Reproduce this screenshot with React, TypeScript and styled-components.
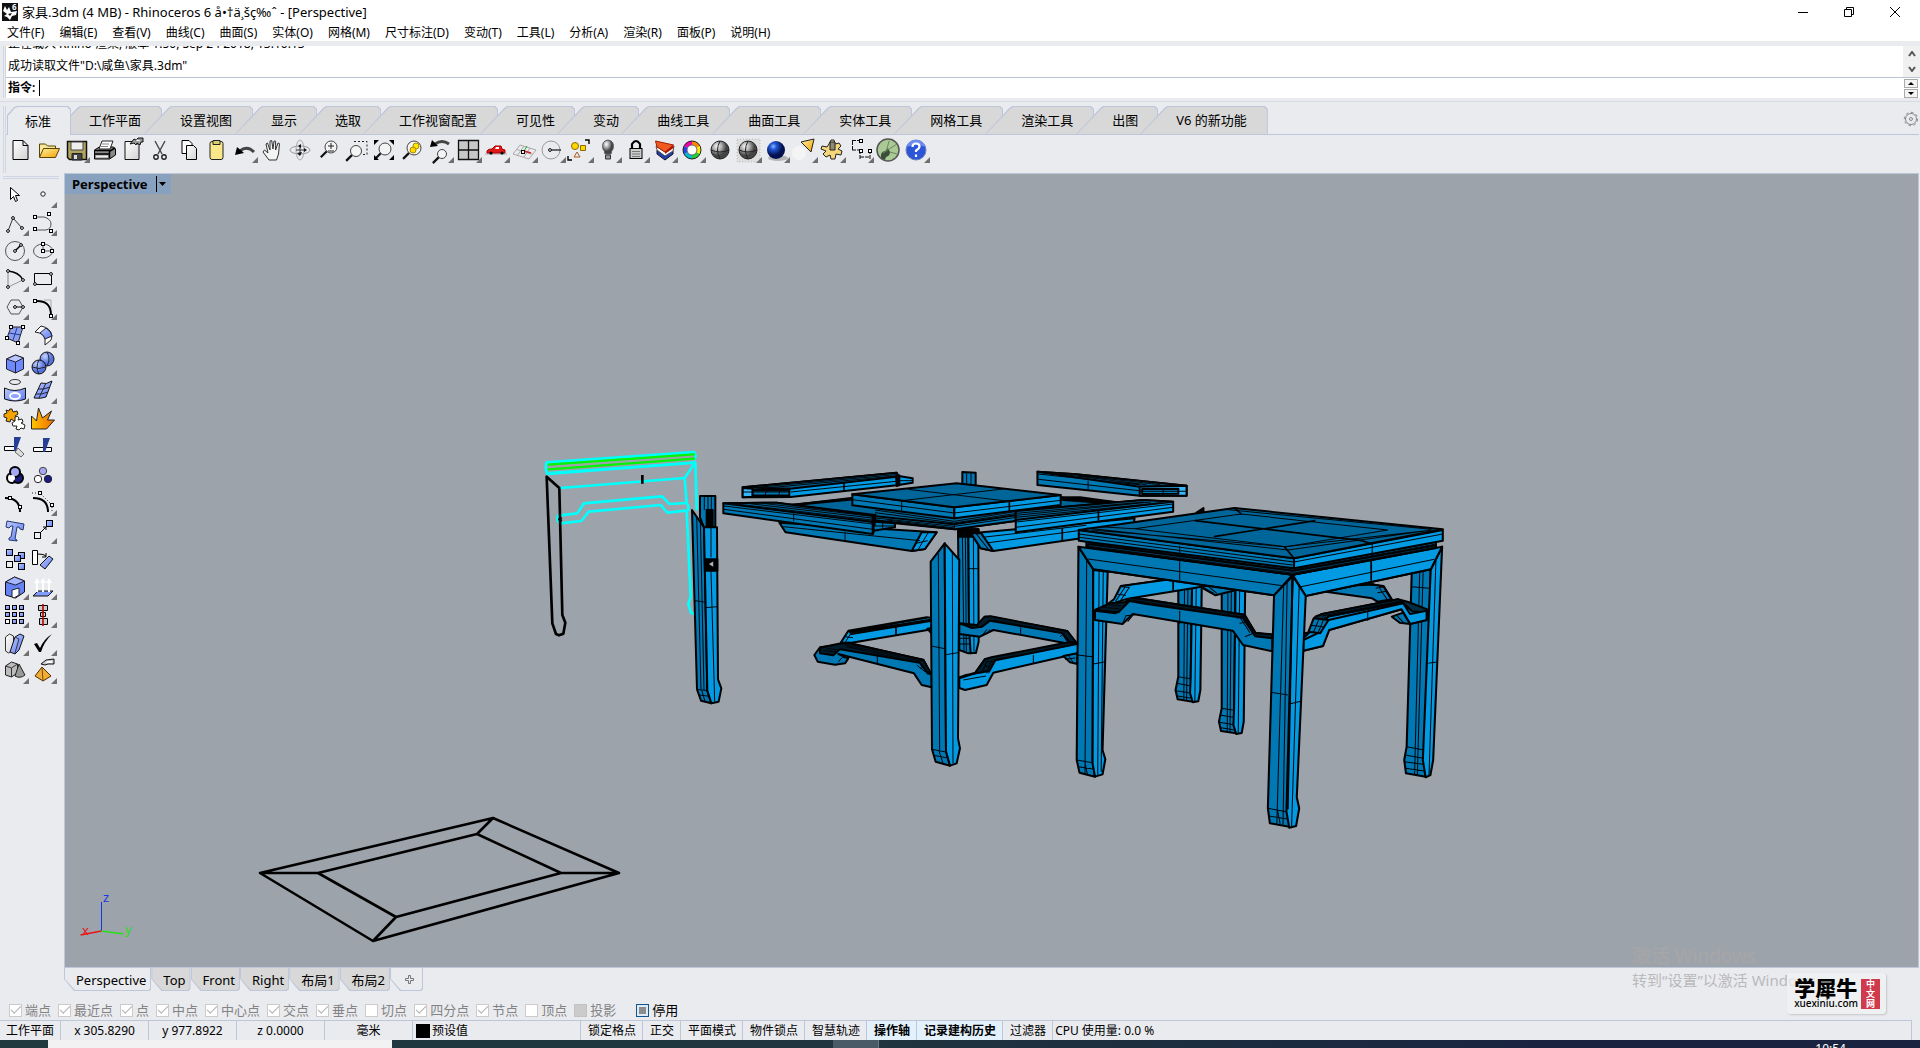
import React from "react";
import styled, { createGlobalStyle, css } from "styled-components";

const EDGE = "#bec6da";
const FACE = "#eaebef";

const GlobalStyle = createGlobalStyle`
  * { box-sizing: border-box; }
  html, body { margin: 0; height: 100%; overflow: hidden; }
  body {
    font-family: "Noto Sans", "Noto Sans CJK SC", sans-serif;
    font-size: 12px;
    line-height: 16px;
    color: #000;
    background: ${FACE};
  }
  button, input { font: inherit; color: inherit; margin: 0; padding: 0; border: 0; background: none; outline: none; }
`;

const Window = styled.div`
  display: flex;
  flex-direction: column;
  height: 100vh;
  position: relative;
  background: ${FACE};
  white-space: nowrap;
`;

/* ---------- title and menu ---------- */
const TitleBar = styled.header`
  display: flex;
  align-items: center;
  height: 24px;
  padding: 0 2px 0 1px;
  background: #fff;
  & > svg { flex: none; }
`;
const Title = styled.h1`
  margin: 0 0 0 3px;
  flex: 1;
  font-size: 13px;
  font-weight: 400;
`;
const WindowButton = styled.button`
  width: 46px;
  height: 20px;
  display: grid;
  place-items: center;
`;
const MenuBar = styled.nav`
  display: flex;
  gap: 15px;
  height: 17px;
  padding-left: 7px;
  background: #fff;
`;
const MenuItem = styled.button`
  line-height: 17px;
`;

/* ---------- command area ---------- */
const CommandArea = styled.section`
  display: flex;
  margin-top: 5px;
  height: 52px;
  padding-left: 3px;
`;
const SideGrip = styled.span`
  width: 3px;
  border: solid #d0d6e2;
  border-width: 0 1px;
  flex: none;
`;
const CommandBody = styled.div`
  flex: 1;
  background: #fff;
`;
const History = styled.div`
  display: flex;
  height: 32px;
  border-bottom: 1px solid #b9c3d2;
`;
const HistoryText = styled.div`
  flex: 1;
  display: flex;
  flex-direction: column;
  justify-content: flex-end;
  overflow: hidden;
  padding-left: 2px;
  line-height: 22px;
`;
const ScrollColumn = styled.div`
  width: 17px;
  display: flex;
  flex-direction: column;
  justify-content: space-around;
  align-items: center;
  background: #f0f0f0;
`;
const Prompt = styled.div`
  display: flex;
  align-items: center;
  height: 20px;
  padding-left: 2px;
  gap: 4px;
`;
const PromptLabel = styled.label`
  font-weight: 600;
`;
const PromptInput = styled.input`
  flex: 1;
  height: 16px;
  border-left: 1px solid #000;
`;
const Spinner = styled.div`
  width: 14px;
  margin-right: 2px;
  display: grid;
  gap: 1px;
`;
const SpinButton = styled.button`
  height: 9px;
  border: 1px solid #aaa;
  background: #f4f4f4;
  display: grid;
  place-items: center;
`;

/* ---------- toolbar ---------- */
const Ribbon = styled.section`
  display: flex;
  margin-top: 3px;
  height: 72px;
  padding: 4px 1px 0 3px;
  border-top: 1px solid #d6dae5;
`;
const RibbonBody = styled.div`
  flex: 1;
  min-width: 0;
`;
const TabRow = styled.div`
  display: flex;
  height: 29px;
  border-bottom: 1px solid ${EDGE};
`;
const SlantTab = styled.button<{ $on?: boolean; $long?: boolean }>`
  position: relative;
  z-index: 0;
  height: 28px;
  flex: none;
  font-size: 13px;
  line-height: 24px;
  padding: 0 ${(p) => (p.$long ? 21 : 20)}px 0 36px;
  margin-left: -18px;
  &::before, &::after {
    content: "";
    position: absolute;
    z-index: -1;
    inset: 0;
    background: ${EDGE};
    clip-path: polygon(0 100%, 24px 2px, 27px 0, calc(100% - 3px) 0, 100% 3px, 100% 100%);
  }
  &::after {
    inset: 1px 1px 0 1px;
    background: #d8d8d8;
  }
  ${(p) => p.$on && css`
    z-index: 2;
    height: 29px;
    padding: 0 20px 0 18px;
    margin-left: 1px;
    &::before, &::after {
      clip-path: polygon(0 100%, 0 9px, 7px 1px, 10px 0, calc(100% - 3px) 0, 100% 3px, 100% 100%);
    }
    &::before { bottom: 1px; background: ${EDGE}; }
    &::after { background: ${FACE}; }
  `}
`;
const GearButton = styled.button`
  margin-left: auto;
  width: 16px;
  height: 26px;
  display: grid;
  place-items: center;
`;
const IconRow = styled.div`
  display: flex;
  padding-top: 1px;
`;
const Tool = styled.button`
  width: 28px;
  height: 28px;
  flex: none;
  & > svg { display: block; overflow: visible; }
`;

/* ---------- workspace ---------- */
const Workspace = styled.div`
  flex: 1;
  min-height: 0;
  display: flex;
`;
const Palette = styled.aside`
  width: 64px;
  flex: none;
  padding: 3px 0 0 1px;
`;
const TopGrip = styled.span`
  display: block;
  width: 56px;
  height: 3px;
  margin: 0 0 2px 2px;
  border: solid #cdd5e4;
  border-width: 1px 0;
`;
const PaletteGrid = styled.div`
  display: grid;
  grid-template-columns: 28px 28px;
`;
const Stage = styled.main`
  flex: 1;
  min-width: 0;
  display: flex;
  flex-direction: column;
`;
const Viewport = styled.section`
  flex: 1;
  min-height: 0;
  position: relative;
  margin-right: 1px;
  border: 1px solid ${EDGE};
  background: #9da3ab;
  overflow: hidden;
`;
const Scene = styled.svg`
  position: absolute;
  inset: 0;
  width: 100%;
  height: 100%;
`;
const ViewLabel = styled.div`
  position: relative;
  display: inline-flex;
  align-items: center;
  gap: 8px;
  height: 20px;
  padding: 0 5px 0 7px;
  background: #88a1be;
  font-size: 13px;
  font-weight: 700;
`;
const ViewMenu = styled.button`
  height: 16px;
  padding-left: 2px;
  border-left: 1px solid #000;
  display: grid;
  place-items: center;
`;
const ViewTabs = styled.div`
  display: flex;
  height: 32px;
`;
const ViewTab = styled.button<{ $on?: boolean }>`
  position: relative;
  z-index: ${(p) => (p.$on ? 1 : 0)};
  height: 23px;
  font-size: 13px;
  line-height: 22px;
  padding: 1px 5px 0 12px;
  &::before, &::after {
    content: "";
    position: absolute;
    z-index: -1;
    inset: 0;
    background: ${EDGE};
    clip-path: polygon(0 0, 100% 0, 100% calc(100% - 2px), calc(100% - 2px) 100%, 10px 100%, 0 11px);
  }
  &::after {
    inset: 0 1px 1px 1px;
    background: ${(p) => (p.$on ? FACE : "#d8d8d8")};
  }
`;

/* ---------- snap row and status ---------- */
const SnapRow = styled.div`
  display: flex;
  align-items: center;
  height: 20px;
  padding-left: 4px;
  font-size: 13px;
`;
const SnapList = styled.div`
  display: flex;
  gap: 7px;
  padding-left: 2px;
`;
const SnapLabel = styled.label<{ $live?: boolean }>`
  display: flex;
  align-items: center;
  gap: 3px;
  color: ${(p) => (p.$live ? "#000" : "#838383")};
  margin-left: ${(p) => (p.$live ? "13px" : "0")};
`;
const Box = styled.input<{ $kind?: "mixed" | "live" }>`
  appearance: none;
  width: 13px;
  height: 13px;
  display: grid;
  place-items: center;
  border: 1px solid #cbcbcb;
  background: #fff;
  &:checked::before {
    content: "";
    width: 9px;
    height: 4px;
    margin-bottom: 3px;
    border: solid #b2b2b2;
    border-width: 0 0 1px 1px;
    transform: rotate(-45deg);
  }
  ${(p) => p.$kind === "mixed" && css`background: #cbcbcb; border-color: #c2c2c2;`}
  ${(p) => p.$kind === "live" && css`
    border-color: #10558f;
    background: #8c8c8c;
    box-shadow: inset 0 0 0 2px #dfeaf4;
  `}
`;
const StatusBar = styled.footer`
  display: flex;
  height: 20px;
  margin-right: 8px;
  border-top: 1px solid ${EDGE};
  border-right: 1px solid ${EDGE};
`;
const Cell = styled.div<{ $w?: number; $grow?: boolean }>`
  display: flex;
  align-items: center;
  justify-content: ${(p) => (p.$grow ? "flex-start" : "center")};
  gap: 2px;
  flex: none;
  ${(p) => p.$w && css`width: ${p.$w}px;`}
  padding: ${(p) => (p.$grow ? "0 3px" : "0 5px")};
  border-right: 1px solid ${EDGE};
`;
const Swatch = styled.span`
  width: 14px;
  height: 14px;
  background: #000;
`;
const ToggleCell = styled.button<{ $on?: boolean }>`
  flex: none;
  padding: 0 6px 0 7px;
  border-right: 1px solid ${EDGE};
  ${(p) => p.$on && css`font-weight: 700; background: #e3f1fc;`}
`;
const Cpu = styled.output`
  padding-left: 2px;
  line-height: 19px;
`;
const Taskbar = styled.div`
  display: flex;
  height: 8px;
  padding-left: 48px;
  background: linear-gradient(90deg, #213a40, #20353f 45%, #1a2440 80%);
  overflow: hidden;
`;
const TaskSearch = styled.div`
  width: 344px;
  background: #f2f2f2;
`;
const TaskActive = styled.div`
  width: 46px;
  margin-left: 441px;
  background: #495b66;
  border-right: 1px solid #6d7d86;
`;
const Clock = styled.time`
  margin-left: auto;
  margin-right: 74px;
  padding-top: 1px;
  line-height: 16px;
  color: #fff;
`;

/* ---------- overlays ---------- */
const Activation = styled.div`
  position: absolute;
  right: 94px;
  bottom: 57px;
  width: 194px;
  font-size: 15px;
  line-height: 22px;
  color: #b9b9bb;
`;
const ActivationTitle = styled.div`
  font-size: 19px;
  line-height: 26px;
  color: #a8a6a6;
`;
const Brand = styled.div`
  position: absolute;
  right: 34px;
  bottom: 34px;
  display: flex;
  align-items: center;
  gap: 3px;
  height: 41px;
  padding: 0 6px 0 7px;
  border-radius: 4px;
  background: rgba(241, 242, 244, 0.7);
  box-shadow: 1px 1px 2px #c4c5c9;
`;
const BrandName = styled.div`
  font-size: 21px;
  line-height: 20px;
  font-weight: 900;
`;
const BrandUrl = styled.div`
  font-size: 10px;
  line-height: 11px;
  font-weight: 500;
`;
const BrandSeal = styled.div`
  width: 19px;
  height: 30px;
  background: #cf3b4d;
  color: #fff;
  font-size: 9px;
  line-height: 10px;
  font-weight: 700;
  text-align: center;
  white-space: normal;
  padding: 0 5px;
`;

/* ---------- icon pieces ---------- */
const Corner = () => <path d="M28 21v6h-6z" fill="#707070" />;
const Node = ({ x, y, s = 3 }: { x: number; y: number; s?: number }) => (
  <rect x={x - s / 2} y={y - s / 2} width={s} height={s} fill="#fff" stroke="#000" />
);
const Dot = ({ x, y }: { x: number; y: number }) => (
  <circle cx={x} cy={y} r="1.4" fill="#fff" stroke="#000" />
);
const Lens = ({ x = 17, y = 12, r = 6 }: { x?: number; y?: number; r?: number }) => (
  <>
    <path d={`M${x - r * 0.7} ${y + r * 0.7}L${x - r * 0.7 - 6} ${y + r * 0.7 + 6}`} stroke="#111" strokeWidth="2.2" />
    <circle cx={x} cy={y} r={r} fill="#f4f4f4" stroke="#444" />
  </>
);
const Ball = () => (
  <>
    <circle cx="14" cy="14" r="9" fill="url(#grayBall)" stroke="#222" />
    <path d="M14 5q-5 9 0 18M5 14q9 4 18 0" fill="none" stroke="#222" />
  </>
);
const Blue = ({ x, y, s = 6 }: { x: number; y: number; s?: number }) => (
  <rect x={x} y={y} width={s} height={s} fill="url(#blueFill)" stroke="#000" />
);

const Defs = () => (
  <svg width="0" height="0" style={{ position: "absolute" }} aria-hidden="true">
    <defs>
      <radialGradient id="grayBall" cx=".35" cy=".3"><stop offset="0" stopColor="#fff" /><stop offset=".5" stopColor="#aaa" /><stop offset="1" stopColor="#444" /></radialGradient>
      <radialGradient id="blueBall" cx=".35" cy=".3"><stop offset="0" stopColor="#8fb8ff" /><stop offset=".35" stopColor="#2258d8" /><stop offset="1" stopColor="#03124f" /></radialGradient>
      <radialGradient id="softBall" cx=".35" cy=".3"><stop offset="0" stopColor="#c6d3ff" /><stop offset="1" stopColor="#5572d8" /></radialGradient>
      <linearGradient id="blueFill" x2="1" y2="1"><stop offset="0" stopColor="#bccaff" /><stop offset="1" stopColor="#5d7bf0" /></linearGradient>
      <linearGradient id="paper" x2="1" y2="1"><stop offset="0" stopColor="#fff" /><stop offset="1" stopColor="#d2d2d2" /></linearGradient>
      <linearGradient id="gold" x2="1" y2="1"><stop offset="0" stopColor="#fff0a0" /><stop offset="1" stopColor="#f2a300" /></linearGradient>
      <linearGradient id="flame" x2="1" y2="0"><stop offset="0" stopColor="#ffc400" /><stop offset="1" stopColor="#ee6a00" /></linearGradient>
    </defs>
  </svg>
);

type IconDef = [string, React.ReactNode, boolean];

const toolbarIcons: IconDef[] = [
  ["新建", <path d="M7 4.500h10l5 5v14H7zM17 4.500v5h5" fill="url(#paper)" stroke="#000" />, false],
  ["打开", <><path d="M5.500 21V8h6l2 2h8v3" fill="#f8e89a" stroke="#5a4300" /><path d="M5.500 21.500l4-9h16l-4 9z" fill="url(#gold)" stroke="#5a4300" /></>, false],
  ["保存", <><path d="M5.500 5.500h19v18h-17l-2-2z" fill="#b0a460" stroke="#111" strokeWidth="1.500" /><path d="M9 6h12v8H9z" fill="#eee" stroke="#444" /><path d="M10 17.500h10V24H10z" fill="#444" stroke="#222" /><path d="M12 19h3v4h-3z" fill="#ddd" /></>, true],
  ["打印", <><path d="M4.500 14l5-3h14l2 2v6l-6 4h-15z" fill="#8a8a8a" stroke="#000" /><path d="M9 13l3-8h11l-3 8z" fill="#fff" stroke="#222" /><path d="M12 8h7M11 10.500h7" stroke="#888" /><path d="M4.500 14.500h15v8M4.500 18h15M20 15l5-3" fill="none" stroke="#000" strokeWidth="1.500" /><path d="M6 19.500h12v2H6z" fill="#eee" /></>, false],
  ["文件属性", <><path d="M7 5.500h10l4 4V23.500H7z" fill="url(#paper)" stroke="#111" /><path d="M12 8l4-5 2 1 2-2h5v4h-2l-1 3-3-2-1 2-2-2z" fill="#999" stroke="#111" /><path d="M18 4l4 1" stroke="#fff" /></>, false],
  ["剪切", <><path d="M9 5l7 13M19 5l-7 13" stroke="#444" strokeWidth="1.400" /><circle cx="10" cy="21" r="2.200" fill="none" stroke="#222" strokeWidth="1.400" /><circle cx="18" cy="21" r="2.200" fill="none" stroke="#222" strokeWidth="1.400" /></>, false],
  ["复制", <><path d="M8 4.500h7l3 3v10H8z" fill="#fff" stroke="#000" /><path d="M12.500 9.500h7l3 3v11h-10z" fill="url(#paper)" stroke="#000" /></>, false],
  ["粘贴", <><rect x="8" y="5.500" width="13" height="18" rx="2" fill="#f8e88a" stroke="#222" /><path d="M11 4.500h7v4h-7z" fill="#d8cc70" stroke="#222" /></>, false],
  ["复原", <><path d="M10 15q7-6 14 1" fill="none" stroke="#444" strokeWidth="3" /><path d="M5 19l2-8 7 6z" fill="#000" /></>, true],
  ["平移", <path d="M11 24l-6-8 1.500-2L10 17 8 8l1.500-1 2.500 7V5l1.700-.5L15 13l1-8 1.600.2V14L20 7l1.500.6L20.500 18l-2 6z" fill="#f4f4f4" stroke="#333" />, false],
  ["旋转视图", <><ellipse cx="14" cy="14" rx="10" ry="4" fill="none" stroke="#999" /><ellipse cx="14" cy="14" rx="4" ry="10" fill="none" stroke="#aaa" /><path d="M14 9v10M10 14h8" stroke="#333" fill="none" /><path d="M12 10l3-2v4zM11 17l3 3 2-4zM18 12l3 2-3 2z" fill="#111" /></>, false],
  ["动态缩放", <><Lens y={11} /><path d="M14 10h6M17 7v6M14 15h6" stroke="#222" /></>, false],
  ["框选缩放", <><Lens x={14} y={15} r={5.500} /><path d="M12 5.500h13v13h-5" fill="none" stroke="#222" strokeDasharray="2 2" /></>, false],
  ["缩放至最大范围", <><Lens x={15} y={13} r={6} /><path d="M4 4h5L4 9zM24 4h-5l5 5zM4 24v-5l5 5zM24 24h-5l5-5z" fill="#000" /></>, false],
  ["缩放至选取物体", <><Lens x={16} y={12} r={7} /><circle cx="18" cy="10" r="3" fill="#ffea00" stroke="#a98b00" /><circle cx="15" cy="14" r="3" fill="#ffd800" stroke="#a98b00" /></>, false],
  ["复原视图更改", <><Lens x={16} y={18} r={4.500} /><path d="M9 8q7-5 14 0" fill="none" stroke="#444" strokeWidth="3" /><path d="M4 11l2-7 6 6z" fill="#000" /></>, true],
  ["四个工作视窗", <path d="M4.500 4.500h20v19h-20zM14.500 4.500v19M4.500 14h20" fill="#c8c8c8" stroke="#111" strokeWidth="1.300" />, true],
  ["设置视图", <><path d="M3 18h22" stroke="#aaa" /><path d="M5 17q-1-4 5-4l3-3h6l1 3 3 1v3z" fill="#e01818" stroke="#a00" /><path d="M13 13l1-2h3v2z" fill="#fff" /><circle cx="9" cy="17" r="1.600" /><circle cx="20" cy="17" r="1.600" /></>, true],
  ["工作平面", <><path d="M3 18l7-9 16 5-7 9zM7 13.500l16 5M14 10l-7 10M20 12l-6 9" fill="none" stroke="#aaa" /><path d="M14 15l7 2" stroke="#d22" strokeWidth="1.500" /><path d="M14 15l3-5" stroke="#2a2" /><Node x={13} y={16} /></>, true],
  ["物件锁点", <><circle cx="13" cy="14" r="9" fill="none" stroke="#999" /><path d="M13 14h10" stroke="#222" strokeWidth="1.300" /><Dot x={12} y={14} /></>, true],
  ["选取", <><circle cx="9" cy="10" r="3.500" fill="#ffd800" stroke="#8b6a00" /><path d="M14.500 9.500h5v5h-5z" fill="#ffd800" stroke="#8b6a00" /><path d="M8 21l3-5 3 5z" fill="none" stroke="#a55c20" /><path d="M19 4h4v4M2 20v4h4" fill="none" stroke="#000" strokeWidth="1.400" /></>, true],
  ["隐藏物件", <><path d="M11 18q0-3-2-5-2-8 5-9 7 1 5 9-2 2-2 5z" fill="url(#grayBall)" stroke="#555" /><path d="M11.500 19h5v4h-5z" fill="#999" stroke="#333" /></>, true],
  ["锁定物件", <><path d="M10 13V8q4-6 8 0v5" fill="none" stroke="#000" strokeWidth="2.200" /><rect x="8" y="12.500" width="12" height="10" fill="#ccc" stroke="#000" /><path d="M10 15.500h8M10 18h8M10 20.500h8" stroke="#777" /></>, true],
  ["图层", <><path d="M7 14l8 6 8-6v4l-8 6-8-6z" fill="#2040b0" stroke="#112" /><path d="M6 10l9 6 9-6-1 5-8 5-8-6z" fill="#fff" stroke="#555" /><path d="M5.500 5l18 4-8.500 7-8-5z" fill="#f05a20" stroke="#a02000" /><path d="M23.500 9v3l-8.500 6v-2z" fill="#b01808" /></>, true],
  ["对象属性", <><path d="M14 5a9 9 0 018 5l-4 2a4 4 0 00-4-3z" fill="#f80" /><path d="M22 10a9 9 0 010 8l-4-2v-4z" fill="#fe0" /><path d="M22 18a9 9 0 01-8 5v-4a4 4 0 004-3z" fill="#2c3" /><path d="M14 23a9 9 0 01-8-5l4-2a4 4 0 004 3z" fill="#0bc" /><path d="M6 18a9 9 0 010-8l4 2v4z" fill="#24e" /><path d="M6 10a9 9 0 018-5v4a4 4 0 00-4 3z" fill="#e0a" /><circle cx="14" cy="14" r="9" fill="none" stroke="#222" /><circle cx="14" cy="14" r="5" fill="#fff" stroke="#666" /></>, true],
  ["着色", <Ball />, false],
  ["着色模式", <><path d="M3 3h23v23H3z" fill="#dedede" /><path d="M3 3h23v23H3z" fill="none" stroke="#bbb" strokeDasharray="1 2" /><Ball /></>, true],
  ["渲染", <><ellipse cx="16" cy="22" rx="10" ry="3" fill="#b5b5b8" /><circle cx="14" cy="14" r="9" fill="url(#blueBall)" /></>, true],
  ["聚光灯", <><circle cx="9" cy="17" r="7" fill="#f4f4f5" /><path d="M11 6l13-3-3 13z" fill="url(#gold)" stroke="#222" /></>, true],
  ["选项", <><path d="M11 8l2-4h3l1 4 4-1 2 3-3 3 4 2-1 4-5-1-1 5h-4l-1-4-4 2-3-3 3-3-5-2 1-3 5 1z" fill="#f3d77a" stroke="#222" /><path d="M12 6h5v8h-5z" fill="#8b8b78" stroke="#222" /></>, true],
  ["尺寸标注", <><path d="M6 4.500h9M6 14h9M6.500 5v9M14 14v10M24 14v10M14 21h10" fill="none" stroke="#111" strokeDasharray="4 1" /><Node x={15} y={5} /><Node x={15} y={15} /><Node x={24} y={15} /></>, true],
  ["Grasshopper", <><circle cx="14" cy="14" r="11" fill="#a9ca94" stroke="#555" strokeWidth="1.500" /><path d="M7 22q-1-6 4-7l3-3 2 4q0 4-4 5l-1 3z" fill="#3d4d3a" /><path d="M9 17L23 8M16 16l7 2M13 13l2-8" stroke="#6c8663" /></>, false],
  ["说明", <><circle cx="14" cy="14" r="10" fill="#2c55d8" stroke="#6f83b8" /><path d="M4.500 11a10 10 0 0119 0q-9-4-19 0z" fill="#6c8cf0" /><path d="M10.500 11q0-3.500 3.500-3.500t3.500 3q0 2-3.500 4v1.500M14 18.500v2.500" fill="none" stroke="#fff" strokeWidth="2.200" /></>, true],
];

const paletteIcons: IconDef[] = [
  ["选取", <path d="M9.500 6.500v12l3-3 2 5 2-1-2-5h4z" fill="#fff" stroke="#000" />, false],
  ["点", <circle cx="14" cy="13" r="2.200" fill="#fff" stroke="#222" />, true],
  ["多重直线", <><path d="M7 22l5-13 9 10" fill="none" stroke="#333" /><Dot x={7} y={22} /><Dot x={12} y={9} /><Dot x={21} y={19} /></>, true],
  ["曲线", <><path d="M6 8h9q7 2 7 7t-5 6H6" fill="none" stroke="#555" /><Node x={6} y={8} /><Node x={20} y={5} /><Node x={6} y={20} /><Node x={22} y={22} /></>, true],
  ["圆", <><circle cx="14" cy="14" r="9.500" fill="none" stroke="#555" /><path d="M14 14l6-6" stroke="#000" strokeWidth="1.500" /><Dot x={14} y={14} /><Dot x={20} y={8} /></>, true],
  ["椭圆", <><ellipse cx="14" cy="14" rx="9.500" ry="7" fill="none" stroke="#555" /><path d="M14 7v7h9" fill="none" stroke="#555" /><Node x={14} y={7} /><Node x={14} y={14} /><Node x={23} y={14} /></>, true],
  ["圆弧", <><path d="M7 22V6" stroke="#888" /><path d="M7 6q11 1 15 9" fill="none" stroke="#000" strokeWidth="1.400" /><path d="M22 15L7 22" stroke="#999" /><Dot x={7} y={6} /><Dot x={22} y={15} /><Dot x={7} y={22} /></>, true],
  ["矩形", <><path d="M5.500 8.500h17v11h-17z" fill="none" stroke="#000" /><Dot x={22} y={9} /><Dot x={6} y={19} /></>, true],
  ["多边形", <><path d="M6 14l4-7h8l4 7-4 7h-8z" fill="none" stroke="#555" /><path d="M14 14h8" stroke="#000" /><Dot x={14} y={14} /><Dot x={22} y={14} /></>, true],
  ["曲线圆角", <><path d="M15 7h7v9" fill="none" stroke="#aaa" /><path d="M6 8q16-1 16 14" fill="none" stroke="#000" strokeWidth="2" /><Node x={6} y={8} /><Node x={22} y={23} /></>, true],
  ["角点曲面", <><path d="M10 6h12l-5 16-11-5z" fill="#8c9fee" stroke="#222" /><path d="M16 7l-4 12M8 12l12 2" stroke="#223a99" /><Node x={10} y={6} /><Node x={22} y={6} /><Node x={6} y={17} /><Node x={17} y={22} /></>, true],
  ["放样", <><path d="M6 11l6-6q10 2 11 10l-1 4-6 5v-6q-1-6-10-7z" fill="#fff" stroke="#222" /><path d="M11 12l6-5q5 3 6 8l-7 3q-1-4-5-6z" fill="url(#blueFill)" stroke="#223" /></>, true],
  ["立方体", <><path d="M5.500 10l9-4 8 3v11l-8 4-9-4z" fill="#6e88ff" stroke="#222" /><path d="M5.500 10l9-4 8 3-8 4z" fill="#b9c6ff" stroke="#223" /><path d="M14.500 13v11" stroke="#223" /></>, true],
  ["球体", <><circle cx="18" cy="10" r="7" fill="url(#softBall)" stroke="#111" /><circle cx="10" cy="18" r="7" fill="url(#softBall)" stroke="#111" /><path d="M10 11q-4 7 0 14M3 18q7 3 14 0M18 3q4 7 0 14" fill="none" stroke="#223" /></>, true],
  ["投影曲线", <><ellipse cx="14" cy="5" rx="5.500" ry="2.500" fill="none" stroke="#333" /><path d="M3.500 11q10 5 21 0v11q-10 4-21 0z" fill="url(#blueFill)" stroke="#111" /><ellipse cx="14" cy="19" rx="5" ry="3" fill="#8ea4ff" stroke="#fff" strokeWidth="1.800" /></>, true],
  ["网格", <><path d="M12 6q5 2 11-2l-6 16q-5 2-12 1z" fill="url(#blueFill)" stroke="#111" /><path d="M9 12q5 1 12-2M7 17q5 1 12-2M17 6l-7 15" fill="none" stroke="#223" /></>, true],
  ["结合", <><path d="M5 5l3 1q0-3 3-2l1 3 4-1 1 3-3 2 2 3-3 2-3-2-1 3-4-1 1-3-3-1 0-3 3-1z" fill="#f5a300" stroke="#222" /><path d="M14 12q3-2 4 1l-1 2 4-1 1 3-2 1 4 2-1 4-3-1-2 2-3-1 1-3-4 0-1-3 3-2z" fill="#fff" stroke="#222" /></>, false],
  ["炸开", <path d="M2.500 24V11l5 5 2-13 4 10 9-7-4 9 7 0-8 9z" fill="url(#flame)" stroke="#222" />, false],
  ["修剪", <><path d="M3.500 13.500h11v4h-11z" fill="#fff" stroke="#000" /><path d="M17 15l6 6-3 3-6-5z" fill="#ddd" stroke="#666" /><path d="M13 4h7l-5 14h-2z" fill="#253f96" /></>, false],
  ["分割", <><path d="M4.500 14.500h18v4h-18z" fill="#fff" stroke="#000" /><path d="M14 5h7l-5 14h-2z" fill="#253f96" /></>, false],
  ["群组", <><circle cx="11" cy="17" r="5" stroke="#000" strokeWidth="2" fill="#fff" /><circle cx="17" cy="17" r="5" stroke="#000" strokeWidth="2" fill="#1b1b80" /><circle cx="14" cy="11" r="5" stroke="#000" strokeWidth="2" fill="#a4a8f5" /><circle cx="11" cy="17" r="3" fill="#fff" /></>, true],
  ["解散群组", <><circle cx="14" cy="10" r="3.700" fill="#a4a8f5" stroke="#444" /><circle cx="9" cy="18" r="3.700" fill="#fff" stroke="#222" /><circle cx="19" cy="18" r="3.700" fill="#1b1b80" stroke="#223" /></>, false],
  ["编辑控制点", <><path d="M4 9q15 0 15 14" fill="none" stroke="#000" strokeWidth="2" /><Node x={9} y={9} /><Node x={19} y={18} /></>, false],
  ["调整曲线", <><path d="M4 9q15 0 15 14" fill="none" stroke="#000" strokeWidth="2" /><path d="M3 4h8l12 12v7" fill="none" stroke="#222" strokeDasharray="1 2" /><Node x={11} y={4} /><Node x={23} y={16} /></>, true],
  ["文字", <path d="M6 4l17 3-1 6-3-1-1-2-2 0-2 12 2 1v1l-8-1v-2l2-1 2-11-2 0-2 2-3-1z" fill="url(#blueFill)" stroke="#23386e" />, false],
  ["移动", <><Blue x={17.500} y={3.500} /><rect x="5.500" y="15.500" width="6" height="6" fill="#eee" stroke="#000" /><path d="M12 15l5-5M17 13v-3h-3" fill="none" stroke="#000" /></>, true],
  ["复制物件", <><Blue x={5.500} y={4.500} /><Blue x={17.500} y={7.500} /><Blue x={13.500} y={10.500} /><Blue x={17.500} y={18.500} /><rect x="5.500" y="16.500" width="6" height="6" fill="#eee" stroke="#000" /></>, false],
  ["旋转", <><path d="M3.500 5.500h5v14h-5z" fill="#fff" stroke="#000" /><path d="M9 9q6 0 8 2M13 12h4V8" fill="none" stroke="#000" /><path d="M20 11l4 3-8 10-5-4z" fill="url(#blueFill)" stroke="#111" /></>, false],
  ["布尔运算", <><path d="M4.500 9l9-5 10 4v11l-9 6-10-3z" fill="#6383f5" stroke="#111" /><path d="M4.500 9l9-5 10 4-9 4z" fill="#a3b6ff" stroke="#223" /><path d="M11 24v-7l7-2v7l-5 3z" fill="#fff" stroke="#222" /></>, true],
  ["挤出", <><path d="M4 23l5-5h15l-5 5z" fill="#819dff" stroke="#111" /><path d="M8 19V9M14 19V9M20 19V9" stroke="#fff" strokeWidth="2" /><path d="M5 10l3-5 3 5zM11 10l3-5 3 5zM17 10l3-5 3 5z" fill="#fff" /></>, true],
  ["矩形阵列", <>{[0, 1, 2].map((r) => [0, 1, 2].map((c) => <Blue key={`${r}${c}`} x={4.500 + c * 7} y={4.500 + r * 7} s={4} />))}<rect x="4.500" y="18.500" width="4" height="4" fill="#fff" stroke="#000" /></>, true],
  ["对齐", <><path d="M9.500 4.500h9v5h-9zM11.500 11.500h5v4h-5zM10.500 17.500h8v6h-8z" fill="#ccc" stroke="#000" /><path d="M14 3v22" stroke="#b00" strokeWidth="1.600" /></>, true],
  ["弯曲", <><path d="M4.500 8l4-3 4 2v14l-5 3-3-2z" fill="url(#paper)" stroke="#333" /><path d="M14 8l5-3 4 2-5 14-4 4-5-2z" fill="url(#blueFill)" stroke="#111" /><path d="M14 8l4 2-4 14" fill="none" stroke="#334" /></>, true],
  ["检查", <path d="M5 15l3-1 3 5q4-9 12-14-8 8-11 18h-2z" fill="#000" />, true],
  ["分析", <><path d="M4.500 9l6-4 6 2v9l-6 4-6-2z" fill="#bbb" stroke="#222" /><path d="M4.500 9l6 2 6-4M10.500 11v9" fill="none" stroke="#333" /><path d="M18 7l6 11q-5 4-10 1z" fill="#999" stroke="#222" /></>, true],
  ["属性", <><path d="M6 19l7-9 9 9-8 5z" fill="#f2ad35" stroke="#4b2d00" /><path d="M13 10l1 14" stroke="#7a4b00" /><path d="M12 7l5-4 8-1v5h-6l-3 1z" fill="#ccc" stroke="#111" /><path d="M18 4h5v2h-6z" fill="#fff" /></>, true],
];

const ToolButton = ({ icon }: { icon: IconDef }) => (
  <Tool aria-label={icon[0]}>
    <svg width="28" height="28" viewBox="0 0 28 28" fill="#000">
      {icon[1]}
      {icon[2] && <Corner />}
    </svg>
  </Tool>
);

/* ---------- 3D model ---------- */
const TOP = "#006699";
const MID = "#0078b4";
const LIT = "#039ae4";
const END = "#35b8fa";
const SHADE = "#011c2a";
const F = ({ p, c }: { p: string; c: string }) => <polygon points={p} fill={c} />;
const Thin = ({ d }: { d: string }) => <path d={d} fill="none" stroke="#00060a" strokeWidth="3" />;
const Bold = ({ d }: { d: string }) => <path d={d} fill="none" stroke="#000" strokeWidth="5" />;

const SideView = () => (
  <g fill="none" strokeWidth="8" strokeLinejoin="round" strokeLinecap="round">
    <path d="M80 97L522 66q8 12 2 22M80 97q-6 16 2 35L525 98l-31 46-372 30M494 144l6 75M526 98l4 140" stroke="#0ff" />
    <path d="M86 127l436-31" stroke="#0ff" strokeWidth="3" />
    <path d="M86 104L522 73M86 118L522 86" stroke="#00f500" strokeWidth="7" />
    <path d="M114 257l58-7 20-30 234-21 22 23 52-3q8 10 4 22l-62 7-20-23-216 20-22 28-64 7q-12-10-6-23M500 243l12 257-7 22 8 26 10 4" stroke="#0ff" />
    <path d="M118 174L80 140l17 440 11 32 9 4 13-5 6-33-9-23z" stroke="#000" />
    <path d="M367 135v26M124 262l-6 6 6 6" stroke="#000" strokeLinecap="butt" />
  </g>
);

const LooseLeg = () => (
  <g stroke="#000" strokeWidth="6" strokeLinejoin="round">
    <F p="540,198 586,198 586,292 552,292 540,262" c={MID} />
    <F p="516,240 552,292 562,782 574,820 543,812 531,778" c={MID} />
    <F p="552,292 591,292 594,748 604,775 596,815 574,820 562,782" c={LIT} />
    <path d="M560 240h18v50h-18zM555 388h37v34h-37z" />
    <path d="M566 402l14-8v17z" fill="#b8bcc0" strokeWidth="1" />
    <Thin d="M530 258l13 520M541 270l11 510M573 292v90M573 424l11 390M525 512l27 4M556 533l37-3M553 200v40M564 200v40M574 200v40M531 778l31 4M538 795l31 4M545 780l10 34" />
  </g>
);

const CenterBack = () => (
  <g stroke="#000" strokeWidth="6" strokeLinejoin="round">
    <F p="727,36 767,38 767,80 727,80" c={MID} />
    <Thin d="M740 37v40M753 37v40" />
    <F p="714,208 745,208 747,490 768,578 745,580 718,570" c={MID} />
    <F p="745,208 775,208 776,545 768,578 752,580 747,500" c={LIT} />
    <path d="M716 208h60v22h-60z" />
    <Thin d="M727 215l5 360M736 215l3 360M760 215l2 360M746 326h28M718 535h30M718 552h30" />
    <F p="178,188 650,217 615,267 575,273 197,217" c={MID} />
    <F p="605,217 650,217 615,267 575,273" c={LIT} />
    <Thin d="M190 200l410 42M375 215v28M625 217l-32 54M588 250l35-8" />
    <F p="385,512 620,472 645,475 645,506 395,548 362,548" c={LIT} />
    <Bold d="M385 514L620 474M388 518L640 477M390 523L640 482M528 496v28" />
    <path d="M622 506l14-2v18z" />
    <Thin d="M375 530l24 3M395 516l-20 32M385 514l-18 30" />
    <F p="283,585 300,562 350,555 385,548 610,600 635,645 635,682 605,675 582,640 355,582 385,595 375,610 345,614 293,605" c={MID} />
    <path d="M300 563l56-12 26-2 228 50 25 45-12-4-24-32-239-40-20 18-40-6z" fill={SHADE} />
    <Thin d="M472 583v28M375 555l225 48M380 560l210 46M590 608l22-9 18 36M590 615l25 20M355 606l12-14 16 3M600 625l22-6M310 572l40 4M320 566l40 4" />
    <F p="718,492 772,495 795,470 812,470 1042,514 1072,552 1072,565 1030,548 820,510 780,530 718,522" c={MID} />
    <path d="M720 490l50 6 24-26 18-1 230 44 28 36-24-2-20-28-216-37-24 18-30 4z" fill={SHADE} />
    <Thin d="M902 502v25M820 480l200 38M1030 520l26 30M1040 514l-20 16M795 525l15-16M785 528l16-20" />
    <F p="718,655 765,640 795,598 1042,550 1075,550 1075,580 1065,582 820,638 800,675 735,690 718,684" c={LIT} />
    <path d="M718 652l48-14 28-40 20-6 235-46 25 5-248 50-18 32-70 12z" fill={SHADE} />
    <Thin d="M940 585v27M785 640l15-36 20 2-14 34M792 618l24 4M800 640l14-38M820 600l240-45M730 660l68-12" />
    <path d="M1030 588l42-8v32l-22-5z" fill={MID} />
    <Thin d="M1045 586l16 24M1036 598l30-4" />
  </g>
);

const CenterTop = () => (
  <g stroke="#000" strokeWidth="6" strokeLinejoin="round">
    <F p="68,82 530,38 536,48 578,55 578,68 530,76 212,111 68,112" c={LIT} />
    <F p="68,82 530,38 530,50 210,86" c={TOP} />
    <F p="68,84 98,86 98,110 68,112" c={END} />
    <F p="98,90 208,86 208,108 98,108" c={MID} />
    <path d="M528 50l10-4v30l-8 2z" />
    <Thin d="M90 84L528 44M140 84L528 48M212 96L528 64M68 96h140M140 92l-6 16M180 90l-4 18M536 62h42" />
    <Bold d="M372 68v27M98 92h108M98 106h108" />
    <F p="215,135 400,113 1080,112 1200,128 890,168 890,182 705,208 525,190 460,168" c={TOP} />
    <Bold d="M215 134L396 116M240 134L396 119M1022 112l180 15M1022 116l160 12M1022 120l140 10" />
    <F p="460,168 700,193 888,166 890,182 705,208 460,180" c={MID} />
    <Thin d="M465 150L703 184 890 154M465 158L703 189 890 160M465 174L703 199 890 172M500 180L705 204M703 194v14" />
    <F p="10,130 170,128 465,165 465,185 525,190 525,202 460,212 458,222 10,160" c={MID} />
    <F p="10,130 170,128 465,168 458,186" c={TOP} />
    <Thin d="M12 138l446 54M12 148l446 60M40 131l424 50M90 131l374 44M130 130l334 40M221 160v24M488 186v20M462 198h62M100 142l360 42" />
    <path d="M458 170l8-6-2 30-4 6 2 14-4 8z" />
    <F p="397,103 703,142 703,175 397,136" c={MID} />
    <F p="703,142 1022,105 1022,135 703,175" c={LIT} />
    <F p="397,103 710,70 1022,105 703,142" c={TOP} />
    <Thin d="M397 119l306 40 319-38M565 88l303 36M545 122L850 87M545 122v31" />
    <Bold d="M868 123v32" />
  </g>
);

const FrontLeg = () => (
  <g stroke="#000" strokeWidth="6" strokeLinejoin="round">
    <F p="632,305 674,250 678,874 690,917 647,905 636,868" c={MID} />
    <F p="674,250 718,300 714,835 720,865 710,910 690,917 678,874" c={LIT} />
    <Thin d="M655 280l4 590M697 275l2 635M634 558l40 8M678 584l36-6M636 868l42 8M641 886l42 8M657 872l12 38" />
  </g>
);

const RightRails = () => (
  <g stroke="#000" strokeWidth="6" strokeLinejoin="round">
    <F p="283,95 395,103 716,137 716,167 580,167 283,135" c={MID} />
    <F p="283,95 395,103 716,137 580,140" c={TOP} />
    <F p="580,140 716,137 716,167 580,167" c={END} />
    <F p="587,147 692,146 692,161 587,162" c={MID} />
    <Thin d="M285 102l295 32M285 118l295 34M430 122v29M330 100l270 34M400 106l240 28M648 147v14M580 154h135" />
    <F p="90,280 220,268 565,235 560,270 400,296 155,333 118,325" c={LIT} />
    <F p="90,280 120,280 155,333 118,325" c={MID} />
    <Thin d="M125 292l300-36M140 308l260-36M105 281l35 46" />
    <Bold d="M355 264v38" />
    <F p="220,213 590,180 677,185 677,215 220,277" c={LIT} />
    <F p="220,213 590,180 677,185 220,240" c={TOP} />
    <Thin d="M222 220l370-34M222 226l390-40M222 232l420-44M222 246l455-54M222 262l455-60" />
    <Bold d="M460 212v30" />
    <path d="M745 218l20-14v16z" />
  </g>
);

const RearLeg = ({ x, y, h }: { x: number; y: number; h: number }) => (
  <g transform={`translate(${x} ${y})`}>
    <F p={`8,0 48,0 44,${h} 50,${h + 75} 6,${h + 68} 0,${h + 40} 8,${h}`} c={MID} />
    <F p={`48,0 76,0 72,${h + 40} 66,${h + 74} 50,${h + 77} 42,${h + 50} 44,${h}`} c={LIT} />
    <Thin d={`M26 0l-2 ${h + 70}M36 0l-4 ${h + 70}M60 0l-4 ${h + 74}M6 ${h}l38 6M2 ${h + 20}l40 7M1 ${h + 42}l42 7M6 ${h + 58}l40 7`} />
  </g>
);

const Table = () => (
  <g stroke="#000" strokeWidth="6" strokeLinejoin="round">
    <RearLeg x={684} y={440} h={270} />
    <RearLeg x={810} y={450} h={355} />
    <F p="525,438 690,415 780,430 760,440 545,476 480,498 505,478" c={LIT} />
    <Thin d="M525 440l25 2-30 46M512 462l28 4M538 440l-28 44" />
    <Bold d="M677 425v30M525 438l120-18" />
    <path d="M755 440l35-5 70 15-60 16z" fill={MID} />
    <Thin d="M765 442l30 18M780 440l24 20" />
    <F p="1120,455 1230,430 1288,438 1312,478 1270,485 1255,475" c={MID} />
    <Thin d="M1265 445l25-5 20 36M1270 458l26-4M1276 444l22 34" />
    <Bold d="M1180 438l80-4 28 6 22 38M1180 434l80-2" />

    <F p="1370,390 1425,385 1410,1010 1353,1000 1348,960 1355,920" c={MID} />
    <F p="1425,385 1458,320 1432,960 1424,1005 1410,1012 1402,960" c={LIT} />
    <Thin d="M1393 390l-15 615M1403 390l-17 615M1440 360l-20 645M1370 440l50 5M1418 670l24-4M1355 920l50 10M1350 945l54 10M1348 965l54 8M1352 985l54 8" />

    <F p="402,320 445,388 443,960 450,1010 405,998 397,960" c={MID} />
    <F p="445,390 487,395 472,930 480,958 472,1003 450,1010 443,970" c={LIT} />
    <Thin d="M426 355l-5 650M462 392l-4 615M474 395l-6 600M400 645l42 5M445 672l32-6M397 960l46 8M402 980l46 8M420 963l8 40" />

    <F p="450,512 510,520 545,478 575,475 885,524 915,578 965,585 965,634 880,615 850,572 560,522 530,552 450,540" c={MID} />
    <path d="M450 510l42-20 45-4 20-12 25 2 300 48 35 55 48 4v12l-50-6-36-56-284-42-45-8-32 34z" fill={SHADE} />
    <Thin d="M540 478l330 52M530 552l10-25 28-3M545 545l14-18M696 512v40M862 535l25-8 28 48M870 530l30 48M870 550l26-5M885 590l25-10M470 502l50 4M485 494l40 4" />
    <F p="1055,595 1070,580 1090,530 1110,522 1330,478 1365,495 1415,510 1413,540 1365,552 1340,508 1130,570 1112,618 1055,632" c={LIT} />
    <path d="M1058 582l20-6 14-46 18-8 220-44 30 8 55 22v10l-45-4-28-28-214 42-25 44-45 8z" fill="#032d43" />
    <F p="1055,600 1096,580 1128,540 1345,490 1365,522 1413,512 1413,540 1365,552 1340,508 1130,570 1112,618 1055,632" c={LIT} />
    <F p="1085,535 1128,540 1104,580 1070,575" c={MID} />
    <F p="1312,530 1345,518 1365,552 1335,548" c={MID} />
    <Thin d="M1242 515v28M1100 538l-16 40M1114 538l-16 40M1076 556l42 5M1110 528l230-46M1115 534l230-46M1326 526l20 22" />

    <F p="402,320 1024,404 970,466 445,388" c={MID} />
    <F p="1024,404 1458,320 1425,388 1062,468" c={LIT} />
    <Thin d="M430 357l565 80M696 364v58M1048 440l388-82" />
    <Bold d="M1252 362v60M402 320l43 68 525 78M1458 322l-32 66-364 80" />

    <F p="425,300 1026,385 1440,305 1440,322 1024,404 425,322" c={MID} />
    <path d="M430 312l595 80 415-76v8l-416 80-594-82z" fill="#023f60" />
    <Thin d="M430 308l595 82 415-78M425 318l600 82 415-78" />
    <F p="403,270 1028,355 1028,385 403,302" c={MID} />
    <F p="1028,355 1460,270 1460,302 1028,385" c={LIT} />
    <F p="403,270 855,204 1460,268 1028,355" c={TOP} />
    <Thin d="M403 282l625 84 432-84M403 292l625 84M425 264l585 66M1010 330l420-60M440 270l560 50 430-50M825 208l600 60M696 318v24" />
    <Thin d="M565 266L875 222 1300 270 1005 320zM465 260l100 6M1255 312v36" />
    <Bold d="M740 242l485 60 30 10M795 290l295-48M1000 320l28 35M855 204l20 18" />

    <F p="970,466 1024,408 1014,1160 958,1150 952,1105" c={MID} />
    <F p="1024,408 1062,468 1036,1072 1043,1105 1034,1158 1014,1163 1006,1115" c={LIT} />
    <Thin d="M998 436l-20 715M1008 424l-12 730M1043 438l-22 720M960 757l50 8M1014 792l34-8M952 1105l54 10M955 1128l54 9M980 1110l8 44" />
    <Bold d="M1024 408l-14 700" />
  </g>
);

const Model = () => (
  <Scene aria-label="Perspective">
    <g transform="translate(-65 -174)">
      <path d="M260 873L493 818 619 873 373 941zM318 873L477 834 561 873 396 917zM260 873H318M493 818L477 834M619 873H561M373 941L396 917" fill="none" stroke="#000" strokeWidth="2.600" strokeLinejoin="round" />
      <g transform="translate(520 430) scale(.33333)"><SideView /><LooseLeg /></g>
      <g transform="translate(720 460) scale(.33333)"><CenterBack /></g>
      <g transform="translate(720 460) scale(.33333)"><CenterTop /></g>
      <g transform="translate(940 440) scale(.34439 .33333)"><RightRails /></g>
      <g transform="translate(720 460) scale(.33333)"><FrontLeg /></g>
      <g transform="translate(940 440) scale(.34439 .33333)"><Table /></g>
      <path d="M101.500 902v29" stroke="#1537e8" />
      <path d="M101.500 931l-21 4" stroke="#e81515" strokeWidth="1.300" />
      <path d="M101.500 931l22 3" stroke="#25e015" strokeWidth="1.300" />
      <g fontSize="13">
        <text x="103" y="902" fill="#1537e8">z</text>
        <text x="82" y="935" fill="#e81515">x</text>
        <text x="125" y="934" fill="#25e015">y</text>
      </g>
    </g>
  </Scene>
);

const menus = ["文件(F)", "编辑(E)", "查看(V)", "曲线(C)", "曲面(S)", "实体(O)", "网格(M)", "尺寸标注(D)", "变动(T)", "工具(L)", "分析(A)", "渲染(R)", "面板(P)", "说明(H)"];
const tabs = ["标准", "工作平面", "设置视图", "显示", "选取", "工作视窗配置", "可见性", "变动", "曲线工具", "曲面工具", "实体工具", "网格工具", "渲染工具", "出图", "V6 的新功能"];
const viewTabs = ["Perspective", "Top", "Front", "Right", "布局1", "布局2"];
const snaps: [string, boolean][] = [["端点", true], ["最近点", true], ["点", true], ["中点", true], ["中心点", true], ["交点", true], ["垂点", true], ["切点", false], ["四分点", true], ["节点", true], ["顶点", false]];
const toggles: [string, boolean][] = [["锁定格点", false], ["正交", false], ["平面模式", false], ["物件锁点", false], ["智慧轨迹", false], ["操作轴", true], ["记录建构历史", true], ["过滤器", false]];

export default function App() {
  return (
    <Window>
      <GlobalStyle />
      <Defs />
      <TitleBar>
        <svg width="18" height="20" viewBox="0 0 18 20">
          <rect x="1" y="1" width="16" height="18" fill="#111" />
          <path d="M2 9l2-5 2 4 2-3 2 5 6-1-1 4-4 1-2 4-3-3-3-1 3-2z" fill="#fff" />
          <path d="M7 12l4-1-2 3z" fill="#111" />
          <text x="11" y="8" fontSize="8" fontWeight="700" fill="#fff">6</text>
        </svg>
        <Title>家具.3dm (4 MB) - Rhinoceros 6 å•†ä¸šç‰ˆ - [Perspective]</Title>
        <WindowButton aria-label="最小化"><svg width="10" height="10"><path d="M0 5.500h10" stroke="#000" /></svg></WindowButton>
        <WindowButton aria-label="还原"><svg width="10" height="10" fill="none" stroke="#000"><path d="M.5 2.500h7v7h-7zM2.500 2.500v-2h7v7h-2" /></svg></WindowButton>
        <WindowButton aria-label="关闭"><svg width="10" height="10"><path d="M0 0l10 10M10 0L0 10" stroke="#000" /></svg></WindowButton>
      </TitleBar>
      <MenuBar>{menus.map((m) => <MenuItem key={m}>{m}</MenuItem>)}</MenuBar>

      <CommandArea>
        <SideGrip />
        <CommandBody>
          <History>
            <HistoryText>
              <div>正在载入 Rhino 渲染, 版本 1.50, Sep 24 2018, 13:10:13</div>
              <div>成功读取文件"D:\咸鱼\家具.3dm"</div>
            </HistoryText>
            <ScrollColumn>
              <svg width="8" height="6"><path d="M1 5l3-4 3 4" fill="none" stroke="#555" strokeWidth="2" /></svg>
              <svg width="8" height="6"><path d="M1 1l3 4 3-4" fill="none" stroke="#555" strokeWidth="2" /></svg>
            </ScrollColumn>
          </History>
          <Prompt>
            <PromptLabel htmlFor="command">指令:</PromptLabel>
            <PromptInput id="command" />
            <Spinner>
              <SpinButton aria-label="上一行"><svg width="6" height="3"><path d="M0 3l3-3 3 3z" /></svg></SpinButton>
              <SpinButton aria-label="下一行"><svg width="6" height="3"><path d="M0 0l3 3 3-3z" /></svg></SpinButton>
            </Spinner>
          </Prompt>
        </CommandBody>
      </CommandArea>

      <Ribbon>
        <SideGrip />
        <RibbonBody>
          <TabRow>
            {tabs.map((t, i) => <SlantTab key={t} $on={i === 0} $long={t.length > 3}>{t}</SlantTab>)}
            <GearButton aria-label="选项">
              <svg width="16" height="16" viewBox="0 0 16 16" fill="none" stroke="#888">
                <circle cx="8" cy="8" r="5.500" /><circle cx="8" cy="8" r="1.500" />
                <circle cx="8" cy="8" r="6.700" strokeDasharray="2.600 2.600" />
              </svg>
            </GearButton>
          </TabRow>
          <IconRow>{toolbarIcons.map((d) => <ToolButton key={d[0]} icon={d} />)}</IconRow>
        </RibbonBody>
      </Ribbon>

      <Workspace>
        <Palette>
          <TopGrip />
          <PaletteGrid>{paletteIcons.map((d) => <ToolButton key={d[0]} icon={d} />)}</PaletteGrid>
        </Palette>
        <Stage>
          <Viewport>
            <Model />
            <ViewLabel>
              Perspective
              <ViewMenu aria-label="视图菜单"><svg width="7" height="4"><path d="M0 0h7L3.500 4z" /></svg></ViewMenu>
            </ViewLabel>
          </Viewport>
          <ViewTabs>
            {viewTabs.map((t, i) => <ViewTab key={t} $on={i === 0}>{t}</ViewTab>)}
            <ViewTab $on aria-label="新建工作视窗">
              <svg width="16" height="10" viewBox="0 0 16 10"><path d="M6.500.5h2v3h3v2h-3v3h-2v-3h-3v-2h3z" fill="none" stroke="#777" /></svg>
            </ViewTab>
          </ViewTabs>
        </Stage>
      </Workspace>

      <SnapRow>
        <SideGrip />
        <SnapList>
          {snaps.map(([name, on]) => (
            <SnapLabel key={name}><Box type="checkbox" defaultChecked={on} />{name}</SnapLabel>
          ))}
          <SnapLabel><Box type="checkbox" $kind="mixed" />投影</SnapLabel>
          <SnapLabel $live><Box type="checkbox" $kind="live" />停用</SnapLabel>
        </SnapList>
      </SnapRow>
      <StatusBar>
        <Cell $w={61}>工作平面</Cell>
        <Cell $w={88}>x 305.8290</Cell>
        <Cell $w={88}>y 977.8922</Cell>
        <Cell $w={88}>z 0.0000</Cell>
        <Cell $w={88}>毫米</Cell>
        <Cell $w={168} $grow><Swatch />预设值</Cell>
        {toggles.map(([name, on]) => <ToggleCell key={name} $on={on}>{name}</ToggleCell>)}
        <Cpu>CPU 使用量: 0.0 %</Cpu>
      </StatusBar>
      <Taskbar>
        <TaskSearch />
        <TaskActive />
        <Clock>10:54</Clock>
      </Taskbar>

      <Activation>
        <ActivationTitle>激活 Windows</ActivationTitle>
        转到“设置”以激活 Windows
      </Activation>
      <Brand>
        <div>
          <BrandName>学犀牛</BrandName>
          <BrandUrl>xuexiniu.com</BrandUrl>
        </div>
        <BrandSeal>中文网</BrandSeal>
      </Brand>
    </Window>
  );
}
